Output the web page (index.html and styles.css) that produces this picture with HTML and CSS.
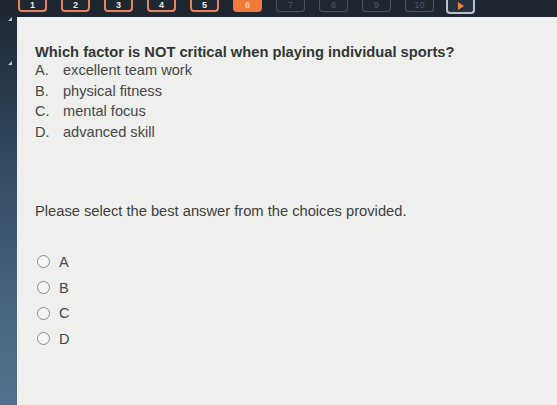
FILE: index.html
```html
<!DOCTYPE html>
<html>
<head>
	<meta charset="utf-8">
	<meta name="viewport" content="width=device-width, initial-scale=1">
	<title>Question 6</title>
	<link rel="stylesheet" href="styles.css">
</head>
<body>
	<div class="page">

		<!-- Навигация по вопросам -->
		<div class="top-bar">
			<div class="pager">
				<button class="page-btn done">1</button>
				<button class="page-btn done">2</button>
				<button class="page-btn done">3</button>
				<button class="page-btn done">4</button>
				<button class="page-btn done">5</button>
				<button class="page-btn current">6</button>
				<button class="page-btn">7</button>
				<button class="page-btn">8</button>
				<button class="page-btn">9</button>
				<button class="page-btn">10</button>
				<button class="page-btn next-btn"><span class="arrow"></span></button>
			</div>
		</div>

		<div class="main">
			<!-- Боковая панель -->
			<div class="side">
				<span class="side-mark"></span>
				<span class="side-mark"></span>
			</div>

			<!-- Вопрос -->
			<div class="question-box">
				<p class="question">Which factor is NOT critical when playing individual sports?</p>
				<ol class="choices">
					<li><span class="letter">A.</span>excellent team work</li>
					<li><span class="letter">B.</span>physical fitness</li>
					<li><span class="letter">C.</span>mental focus</li>
					<li><span class="letter">D.</span>advanced skill</li>
				</ol>

				<p class="hint">Please select the best answer from the choices provided.</p>

				<form class="answers">
					<label class="answer"><input type="radio" name="answer"><span class="radio"></span>A</label>
					<label class="answer"><input type="radio" name="answer"><span class="radio"></span>B</label>
					<label class="answer"><input type="radio" name="answer"><span class="radio"></span>C</label>
					<label class="answer"><input type="radio" name="answer"><span class="radio"></span>D</label>
				</form>
			</div>
		</div>
	</div>
</body>
</html>
```

FILE: styles.css
```css
* {
	box-sizing: border-box;
	font-family: "Liberation Sans", Arial, sans-serif;
}

body {
	margin: 0;
	background-color: #1e2731;
}

.page {
	height: 405px;
	display: flex;
	flex-direction: column;
	overflow: hidden;
}

/* Top bar */
.top-bar {
	height: 17px;
	background-color: #1e2731;
	flex-shrink: 0;
}

.pager {
	display: flex;
	gap: 14px;
	padding-left: 18px;
}

.page-btn {
	width: 29px;
	height: 12px;
	padding: 0;
	border: 2px solid #e9825a;
	border-top: none;
	border-radius: 0 0 4px 4px;
	background-color: #1f2830;
	color: #e8e8e8;
	font-size: 9px;
	font-weight: bold;
	line-height: 9px;
}

.page-btn.current {
	background-color: #f27b3a;
	border-color: #f27b3a;
	color: #f8c8a8;
}

.page-btn:nth-child(n+7) {
	border: 1px solid #4b5560;
	border-top: none;
	color: #4f5a66;
	font-weight: normal;
}

.page-btn.next-btn {
	border: 2px solid #b9c2ca;
	border-top: none;
	margin-left: -2px;
	height: 14px;
	background-color: #263440;
}

.arrow {
	display: inline-block;
	width: 0;
	height: 0;
	margin-top: 1px;
	border-top: 4px solid transparent;
	border-bottom: 4px solid transparent;
	border-left: 6px solid #f5823a;
}

/* Content */
.main {
	flex: 1;
	display: flex;
}

.side {
	width: 17px;
	flex-shrink: 0;
	background: linear-gradient(#1f2a36, #2f4358 30%, #4a6580 75%, #527090);
	display: flex;
	flex-direction: column;
	align-items: flex-end;
	padding: 0 5px 0 0;
}

.side-mark {
	width: 0;
	height: 0;
	border-left: 4px solid transparent;
	border-bottom: 4px solid #b8c0c8;
}

.side-mark + .side-mark {
	margin-top: 40px;
}

.question-box {
	flex: 1;
	background-color: #efefed;
	padding: 27px 0 0 18px;
	color: #3a3f40;
}

.question {
	margin: 0;
	font-size: 14.7px;
	font-weight: bold;
	color: #2f3838;
}

.choices {
	list-style: none;
	margin: 0;
	padding: 0;
	font-size: 14.6px;
	color: #454848;
}

.choices li {
	height: 20.5px;
	line-height: 20px;
}

.letter {
	display: inline-block;
	width: 28px;
}

.hint {
	margin: 61px 0 0;
	font-size: 14.7px;
	color: #3c4040;
}

.answers {
	margin-top: 30px;
	display: flex;
	flex-direction: column;
}

.answer {
	display: flex;
	align-items: center;
	height: 25.7px;
	font-size: 14.6px;
	color: #454848;
}

.answer input {
	display: none;
}

.radio {
	width: 13px;
	height: 13px;
	border: 1px solid #8a8e8e;
	border-radius: 50%;
	margin: 0 9px 0 2px;
	background-color: #f4f4f2;
}
```
